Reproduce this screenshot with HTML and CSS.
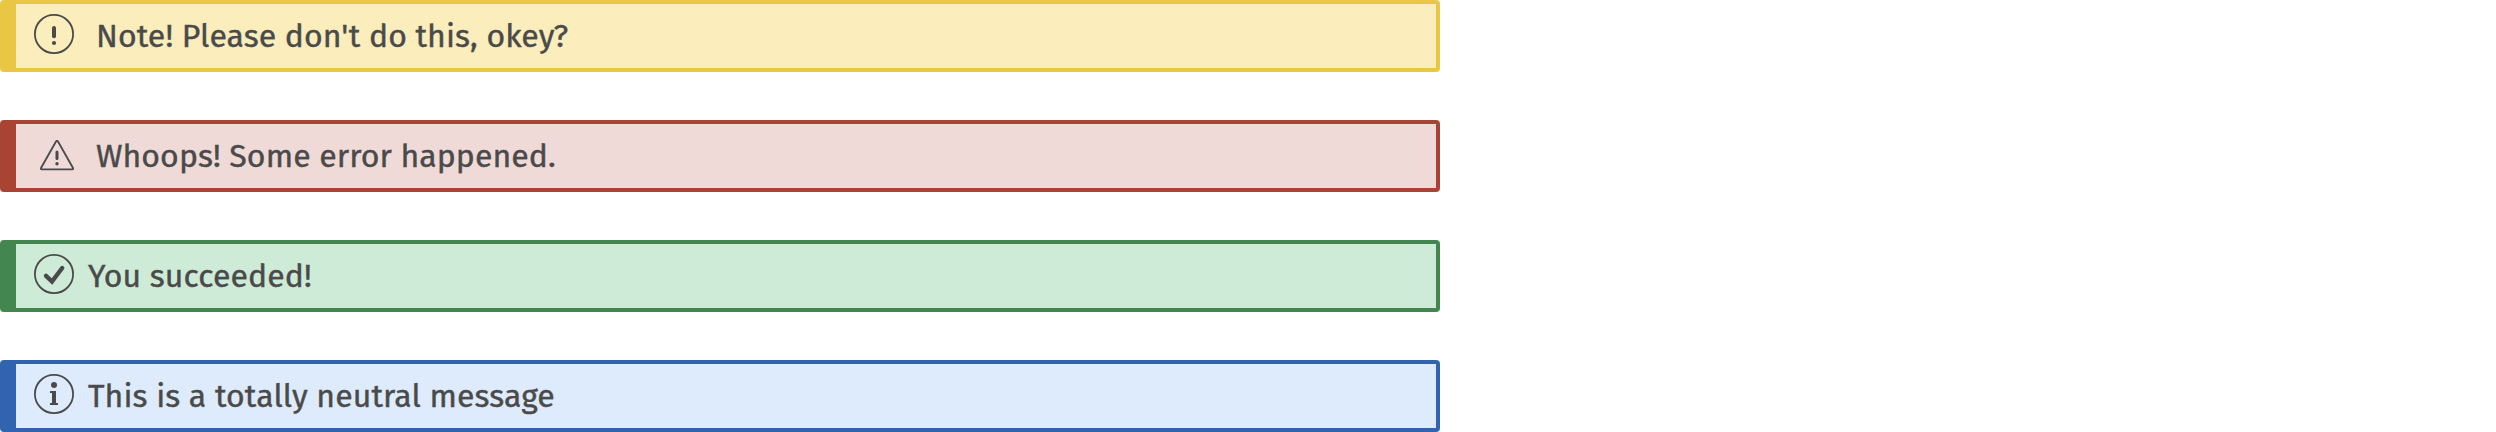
FILE: index.html
```html
<!DOCTYPE html>
<html lang="en">
<head>
<meta charset="utf-8">
<title>Messages</title>
<link rel="stylesheet" href="styles.css">
</head>
<body>
<main class="messages">
  <div class="message message--note">
    <svg class="icon" viewBox="0 0 40 40"><circle cx="20" cy="20" r="19.1"/><path class="thick" d="M20 14v8.2"/><circle class="solid" cx="20" cy="29" r="2.1"/></svg>
    <span class="text">Note! Please don't do this, okey?</span>
  </div>
  <div class="message message--error">
    <svg class="icon icon--triangle" viewBox="0 0 34 31"><path d="M16 1.5Q17 0 18 1.5L33 28Q33.6 29.4 32.2 29.4H1.8Q.4 29.4 1 28Z"/><path class="medium" d="M17 12v6.6"/><circle class="solid" cx="17" cy="23.7" r="1.7"/></svg>
    <span class="text">Whoops! Some error happened.</span>
  </div>
  <div class="message message--success">
    <svg class="icon" viewBox="0 0 40 40"><circle cx="20" cy="20" r="19.1"/><path class="check" d="M12 21.8l6 5.7L28.2 14"/></svg>
    <span class="text">You succeeded!</span>
  </div>
  <div class="message message--info">
    <svg class="icon" viewBox="0 0 40 40"><circle cx="20" cy="20" r="19.1"/><circle class="solid" cx="20" cy="11" r="3"/><path class="solid" d="M16 17h6v12h2v2h-8v-2h2V19h-2z"/></svg>
    <span class="text">This is a totally neutral message</span>
  </div>
</main>
</body>
</html>
```
FILE: styles.css
```css
body {
  margin: 0;
  background: #fff;
  color: #4a4a4a;
  font: 32px/44px "Fira Sans", "Noto Sans", sans-serif;
  letter-spacing: .08px;
}
.messages {
  display: flex;
  flex-direction: column;
  gap: 48px;
  width: 1440px;
}
.message {
  box-sizing: border-box;
  display: flex;
  align-items: flex-start;
  height: 72px;
  padding: 10px 18px;
  border: 4px solid;
  border-left-width: 16px;
  border-radius: 4px;
}
.icon {
  flex: none;
  width: 40px;
  height: 40px;
  fill: none;
  stroke: #4a4a4a;
  stroke-width: 1.8;
}
.icon--triangle {
  width: 34px;
  height: 31px;
  margin: 6px 0 0 6px;
}
.icon .solid { fill: #4a4a4a; stroke: none; }
.icon .thick { stroke-width: 4; stroke-linecap: round; }
.icon .medium { stroke-width: 3; stroke-linecap: round; }
.icon .check { stroke-width: 4.4; stroke-linecap: round; }
.text {
  margin-left: 14px;
  white-space: nowrap;
  -webkit-text-stroke: .4px;
}
.message--note { background: #fbeebc; border-color: #e9c644; }
.message--error { background: #efdad8; border-color: #a94435; }
.message--success { background: #ceebd8; border-color: #438650; }
.message--info { background: #deebfc; border-color: #3263b1; }
.message--note .text { margin-left: 22px; }
.message--error .text { margin-left: 22px; }
```
